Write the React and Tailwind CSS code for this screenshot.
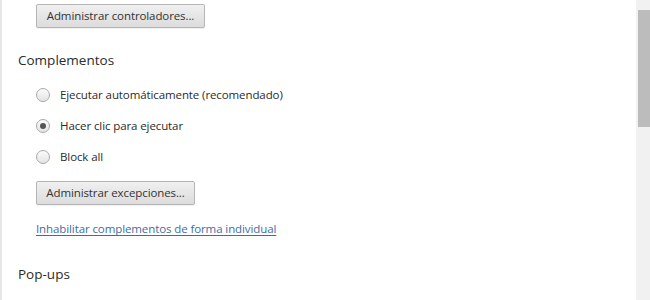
import React from "react";

function Radio({ checked }) {
  return (
    <span className="relative flex h-[14px] w-[14px] items-center justify-center rounded-full border border-[#a9a9a9] bg-gradient-to-b from-[#fbfbfb] to-[#e4e4e4]">
      {checked && <span className="h-[6px] w-[6px] rounded-full bg-[#555555]" />}
    </span>
  );
}

function Btn({ children, w }) {
  return (
    <button
      className={`ml-[34px] flex h-[24px] items-center justify-center whitespace-nowrap rounded-[2px] border border-[#b5b5b5] bg-gradient-to-b from-[#f0f0f0] to-[#dcdcdc] text-[11.5px] tracking-[-0.1px] text-[#333] shadow-[0_1px_0_rgba(0,0,0,0.06)] ${w}`}
    >
      {children}
    </button>
  );
}

export default function App() {
  const rows = [
    { label: "Ejecutar automáticamente (recomendado)", checked: false },
    { label: "Hacer clic para ejecutar", checked: true },
    { label: "Block all", checked: false },
  ];
  return (
    <div
      className="flex h-[300px] w-[650px] overflow-hidden bg-white text-[#2b2b2b]"
      style={{ fontFamily: '"Open Sans", "Noto Sans", sans-serif' }}
    >
      <div className="w-[2px] bg-[#e6e6e6]" />
      <div className="flex flex-1 flex-col pt-[4px]">
        <Btn w="w-[169px]">Administrar controladores...</Btn>
        <div className="mt-[22px] flex h-[20px] items-center pl-[16px] text-[13.5px] text-[#2b2b2b]">
          Complementos
        </div>
        <div className="mt-[9px] flex flex-col">
          {rows.map((r) => (
            <div key={r.label} className="flex h-[31px] items-center pl-[34px]">
              <Radio checked={r.checked} />
              <span className="ml-[10px] whitespace-nowrap text-[11.5px] tracking-[-0.1px]">{r.label}</span>
            </div>
          ))}
        </div>
        <div className="mt-[9px]">
          <Btn w="w-[159px]">Administrar excepciones...</Btn>
        </div>
        <div className="mt-[15px] flex h-[18px] items-center pl-[34px]">
          <a className="whitespace-nowrap text-[11.5px] tracking-[-0.1px] text-[#3e6da3] underline underline-offset-2">
            Inhabilitar complementos de forma individual
          </a>
        </div>
        <div className="mt-[26px] flex h-[20px] items-center pl-[16px] text-[13.5px] text-[#2b2b2b]">
          Pop-ups
        </div>
      </div>
      <div className="flex w-[14px] flex-col bg-[#f1f1f1] pl-[2px] pt-[10px]">
        <div className="h-[117px] bg-[#bcbcbc]" />
      </div>
    </div>
  );
}
